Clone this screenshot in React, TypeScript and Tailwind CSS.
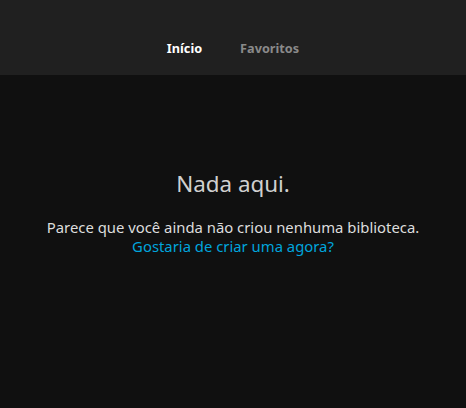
export default function App() {
  return (
    <div
      className="min-h-[408px] bg-[#101010] text-[#dddddd]"
      style={{ fontFamily: '"Noto Sans", sans-serif' }}
    >
      <header className="flex h-[75px] items-end justify-center bg-[#202020] pb-[17px]">
        <nav className="flex gap-[38px] text-[12.7px] font-bold">
          <button className="text-white">Início</button>
          <button className="text-[#8a8a8a]">Favoritos</button>
        </nav>
      </header>
      <main className="flex flex-col items-center pt-[94px] text-center">
        <h1 className="text-[22.4px] leading-[30px] text-[#d0d0d0]">Nada aqui.</h1>
        <p className="mt-[19px] text-[14.85px] leading-[19px] text-[#dddddd]">
          Parece que você ainda não criou nenhuma biblioteca.
          <br />
          <a className="text-[#00a4dc]">Gostaria de criar uma agora?</a>
        </p>
      </main>
    </div>
  );
}
